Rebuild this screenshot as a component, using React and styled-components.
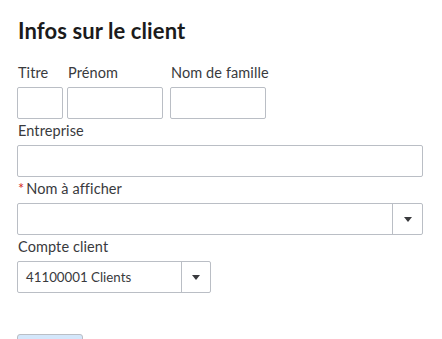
import React from "react";
import styled, { createGlobalStyle } from "styled-components";

const Global = createGlobalStyle`
  html, body { margin: 0; padding: 0; background: #fff; }
  body { font-family: "Lato", "Open Sans", sans-serif; color: #393a3d; }
  * { box-sizing: border-box; }
`;

const Page = styled.div`
  padding: 16px 19px 0 17px;
  height: 339px;
  overflow: hidden;
`;

const Title = styled.h1`
  margin: 0 0 17px 1px;
  font-size: 22px;
  line-height: 30px;
  font-weight: 700;
  letter-spacing: 0.1px;
  color: #1b1b1c;
`;

const Form = styled.div`
  display: flex;
  flex-direction: column;
  gap: 2px;
`;

const Row = styled.div`
  display: flex;
  gap: ${(p) => p.$gap || 4}px;
`;

const Field = styled.div`
  display: flex;
  flex-direction: column;
  width: ${(p) => (p.$w ? `${p.$w}px` : "100%")};
  margin-left: ${(p) => p.$ml || 0}px;
`;

const Label = styled.label`
  font-size: 14.5px;
  line-height: 20px;
  padding: 0 0 4px 1px;
  letter-spacing: 0.1px;
  color: #393a3d;
  white-space: nowrap;
`;

const Req = styled.span`
  color: #d52b1e;
  margin-right: 2px;
`;

const Input = styled.div`
  height: 32px;
  border: 1px solid #babec5;
  border-radius: 2px;
  background: #fff;
`;

const Select = styled.div`
  height: 32px;
  border: 1px solid #babec5;
  border-radius: 2px;
  display: flex;
  align-items: stretch;
  background: #fff;
`;

const SelectValue = styled.div`
  flex: 1;
  padding-left: 8px;
  display: flex;
  align-items: center;
  font-size: 13.3px;
  color: #393a3d;
`;

const Caret = styled.div`
  width: ${(p) => p.$w}px;
  border-left: 1px solid #babec5;
  display: flex;
  align-items: center;
  justify-content: center;
  &::after {
    content: "";
    border-left: 4px solid transparent;
    border-right: 4px solid transparent;
    border-top: 5px solid #393a3d;
    margin-top: 1px;
  }
`;

const ButtonBar = styled.div`
  margin-top: 41px;
`;

const Button = styled.div`
  width: 66px;
  height: 24px;
  background: #d4e7fb;
  border: 1px solid #babec5;
  border-radius: 3px;
`;

export default function App() {
  return (
    <>
      <Global />
      <Page>
        <Title>Infos sur le client</Title>
        <Form>
          <Row $gap={4}>
            <Field $w={46}>
              <Label>Titre</Label>
              <Input />
            </Field>
            <Field $w={96}>
              <Label>Prénom</Label>
              <Input />
            </Field>
            <Field $w={96} $ml={3}>
              <Label>Nom de famille</Label>
              <Input />
            </Field>
          </Row>
          <Field>
            <Label>Entreprise</Label>
            <Input />
          </Field>
          <Field>
            <Label>
              <Req>*</Req>Nom à afficher
            </Label>
            <Select>
              <SelectValue />
              <Caret $w={30} />
            </Select>
          </Field>
          <Field $w={194}>
            <Label>Compte client</Label>
            <Select>
              <SelectValue>41100001 Clients</SelectValue>
              <Caret $w={29} />
            </Select>
          </Field>
        </Form>
        <ButtonBar>
          <Button />
        </ButtonBar>
      </Page>
    </>
  );
}
